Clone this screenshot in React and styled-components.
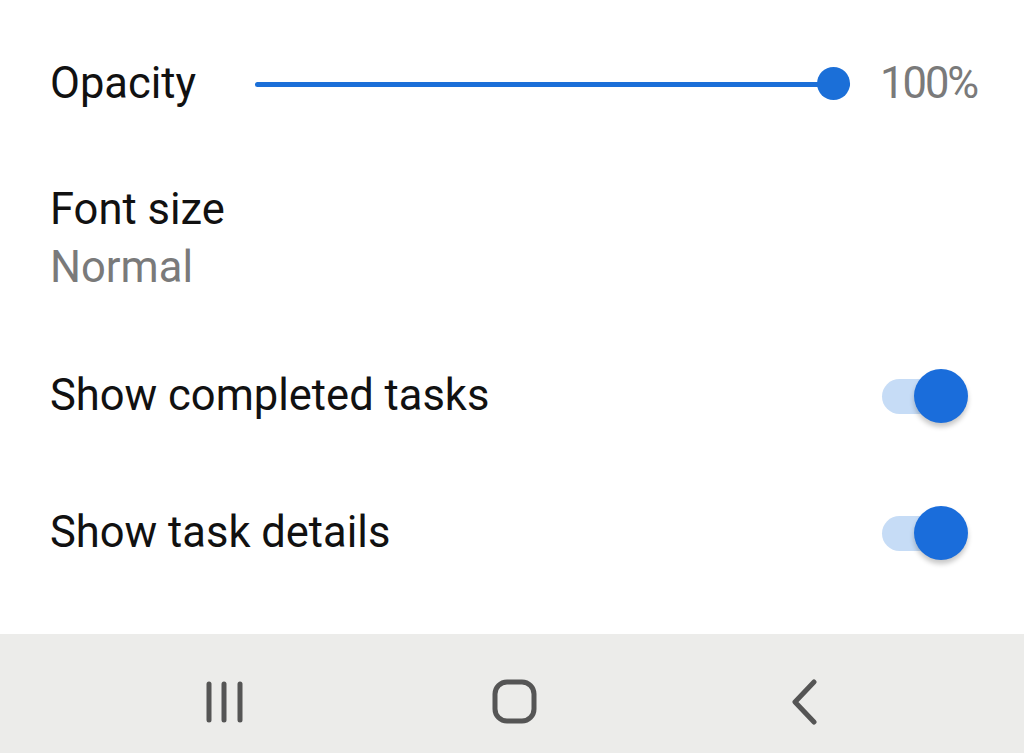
import React from "react";
import styled, { createGlobalStyle } from "styled-components";

const Global = createGlobalStyle`
  html, body { margin: 0; padding: 0; background: #ffffff; }
  body { font-family: Roboto, "Noto Sans", "Liberation Sans", sans-serif; }
  * { box-sizing: border-box; }
`;

const Screen = styled.div`
  width: 1024px;
  height: 753px;
  display: flex;
  flex-direction: column;
  background: #ffffff;
  overflow: hidden;
`;

const Content = styled.div`
  flex: 1;
  display: flex;
  flex-direction: column;
`;

const Row = styled.div`
  height: ${(p) => p.$h}px;
  display: flex;
  align-items: center;
  padding: 0 ${(p) => p.$pr ?? 56}px 0 50px;
`;

const Label = styled.div`
  font-size: 43.5px;
  line-height: 52px;
  color: #111111;
  flex: ${(p) => (p.$fixed ? "0 0 205px" : "1")};
`;

const TextBlock = styled.div`
  display: flex;
  flex-direction: column;
  gap: 6px;
`;

const Sub = styled.div`
  font-size: 43.5px;
  line-height: 52px;
  color: #7a7a7a;
`;

const SliderWrap = styled.div`
  flex: 1;
  position: relative;
  height: 34px;
  display: flex;
  align-items: center;
`;

const Track = styled.div`
  width: 100%;
  height: 5px;
  background: #1b6fd8;
  border-radius: 3px;
`;

const Knob = styled.div`
  position: absolute;
  right: 0;
  top: 0;
  width: 33px;
  height: 33px;
  border-radius: 50%;
  background: #1b6fd8;
`;

const Value = styled.div`
  margin-left: 30px;
  font-size: 43.5px;
  line-height: 52px;
  color: #7a7a7a;
  letter-spacing: -2px;
  width: 95px;
`;

const Switch = styled.div`
  position: relative;
  width: 86px;
  height: 56px;
  display: flex;
  align-items: center;
`;

const SwitchTrack = styled.div`
  width: 72px;
  height: 35px;
  border-radius: 18px;
  background: #c6dcf6;
`;

const SwitchThumb = styled.div`
  position: absolute;
  right: 0;
  top: 1px;
  width: 54px;
  height: 54px;
  border-radius: 50%;
  background: #1a6ddb;
  box-shadow: 0 4px 5px rgba(0, 0, 0, 0.22);
`;

const NavBar = styled.div`
  height: 119px;
  background: #ececea;
  display: grid;
  grid-template-columns: repeat(3, 290px);
  padding-left: 80px;
  align-items: center;
  padding-top: 17px;
`;

const NavItem = styled.div`
  display: flex;
  justify-content: center;
  align-items: center;
`;

const Toggle = () => (
  <Switch>
    <SwitchTrack />
    <SwitchThumb />
  </Switch>
);

export default function App() {
  return (
    <>
      <Global />
      <Screen>
        <Content>
          <Row $h={168} $pr={49}>
            <Label $fixed>Opacity</Label>
            <SliderWrap>
              <Track />
              <Knob />
            </SliderWrap>
            <Value>100%</Value>
          </Row>
          <Row $h={142}>
            <TextBlock>
              <Label>Font size</Label>
              <Sub>Normal</Sub>
            </TextBlock>
          </Row>
          <Row $h={172}>
            <Label>Show completed tasks</Label>
            <Toggle />
          </Row>
          <Row $h={102}>
            <Label>Show task details</Label>
            <Toggle />
          </Row>
        </Content>
        <NavBar>
          <NavItem>
            <svg width="40" height="42" viewBox="0 0 40 42">
              <g stroke="#555" strokeWidth="5" strokeLinecap="round">
                <line x1="4" y1="3" x2="4" y2="39" />
                <line x1="19" y1="3" x2="19" y2="39" />
                <line x1="35" y1="3" x2="35" y2="39" />
              </g>
            </svg>
          </NavItem>
          <NavItem>
            <svg width="46" height="46" viewBox="0 0 46 46">
              <rect x="3" y="3" width="39" height="39" rx="12" fill="none" stroke="#555" strokeWidth="5" />
            </svg>
          </NavItem>
          <NavItem>
            <svg width="28" height="46" viewBox="0 0 28 46">
              <polyline points="23,3 4,23 23,43" fill="none" stroke="#555" strokeWidth="5" strokeLinecap="round" strokeLinejoin="round" />
            </svg>
          </NavItem>
        </NavBar>
      </Screen>
    </>
  );
}
